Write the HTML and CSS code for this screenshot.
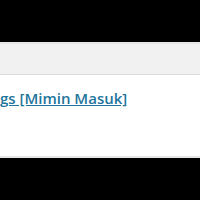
FILE: index.html
```html
<!DOCTYPE html>
<html>
<head>
    <link rel="stylesheet" href="styles.css">
</head>
<body>
    <div class="top-bar"></div>
    <div class="toolbar"></div>
    <div class="content">
        <a href="#" class="title-link">gs [Mimin Masuk]</a>
    </div>
    <div class="bottom-bar"></div>
</body>
</html>
```

FILE: styles.css
```css
 body {
     margin: 0;
     font-family: "Open Sans", Arial, sans-serif;
     background-color: #000;
     height: 200px;
     overflow: hidden;
 }
 .top-bar {
     height: 42px;
     background-color: #000;
 }
 .toolbar {
     height: 30px;
     background-color: #f1f1f1;
     border-top: 2px solid #e5e5e5;
     border-bottom: 1px solid #dcdcdc;
 }
 .content {
     height: 79px;
     background-color: #fff;
     border-bottom: 2px solid #e5e5e5;
     padding-bottom: 2px;
     white-space: nowrap;
 }
 .title-link {
     display: inline-block;
     margin-top: 13px;
     font-size: 15px;
     font-weight: 600;
     color: #21759b;
     text-decoration: underline;
 }
 .bottom-bar {
     height: 42px;
     background-color: #000;
 }
```
